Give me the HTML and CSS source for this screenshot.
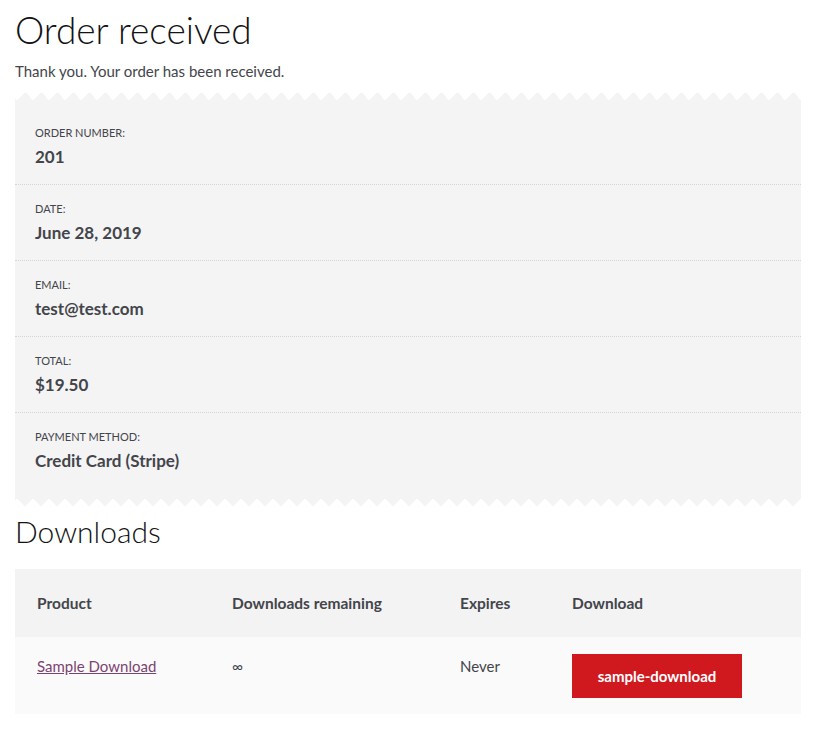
FILE: index.html
```html
<!DOCTYPE html>
<html lang="en">
<head>
<meta charset="utf-8">
<title>Order received</title>
<link rel="stylesheet" href="styles.css">
</head>
<body>
<main class="page">
  <h1 class="page-title">Order received</h1>
  <p class="thanks">Thank you. Your order has been received.</p>

  <section class="order-details">
    <ul class="details-list">
      <li class="detail">
        <span class="detail-label">Order number:</span>
        <strong class="detail-value">201</strong>
      </li>
      <li class="detail">
        <span class="detail-label">Date:</span>
        <strong class="detail-value">June 28, 2019</strong>
      </li>
      <li class="detail">
        <span class="detail-label">Email:</span>
        <strong class="detail-value">test@test.com</strong>
      </li>
      <li class="detail">
        <span class="detail-label">Total:</span>
        <strong class="detail-value">$19.50</strong>
      </li>
      <li class="detail">
        <span class="detail-label">Payment method:</span>
        <strong class="detail-value">Credit Card (Stripe)</strong>
      </li>
    </ul>
  </section>

  <h2 class="section-title">Downloads</h2>

  <table class="downloads">
    <colgroup>
      <col class="col-product">
      <col class="col-remaining">
      <col class="col-expires">
      <col class="col-download">
    </colgroup>
    <thead>
      <tr>
        <th>Product</th>
        <th>Downloads remaining</th>
        <th>Expires</th>
        <th>Download</th>
      </tr>
    </thead>
    <tbody>
      <tr>
        <td><a class="product-link" href="#">Sample Download</a></td>
        <td class="infinite">&infin;</td>
        <td>Never</td>
        <td><a class="button" href="#">sample-download</a></td>
      </tr>
    </tbody>
  </table>
</main>
</body>
</html>
```
FILE: styles.css
```css
* { box-sizing: border-box; }

html, body {
  margin: 0;
  padding: 0;
  background: #ffffff;
}

body {
  font-family: Lato, "Liberation Sans", sans-serif;
  font-size: 15px;
  color: #43454b;
}

.page {
  width: 786px;
  margin-left: 15px;
}

.page-title {
  margin: 0;
  padding-top: 6px;
  font-size: 37px;
  line-height: 48px;
  font-weight: 300;
  color: #131315;
}

.thanks {
  margin: 6px 0 0;
  line-height: 22px;
  font-size: 15px;
  color: #43454b;
}

.order-details {
  position: relative;
  margin-top: 18px;
  background: #f4f4f4;
  padding: 9px 0 10px;
  margin-bottom: 8px;
}

.order-details::before,
.order-details::after {
  content: "";
  position: absolute;
  left: 0;
  width: 100%;
  height: 8px;
  background-size: 16px 8px;
  background-repeat: repeat-x;
  background-position: 2px 0;
}

.order-details::before {
  top: -8px;
  background-image: conic-gradient(from 135deg at 50% 0, #f4f4f4 90deg, transparent 0);
}

.order-details::after {
  bottom: -8px;
  background-image: conic-gradient(from -45deg at 50% 100%, #f4f4f4 90deg, transparent 0);
}

.details-list {
  list-style: none;
  margin: 0;
  padding: 0;
}

.detail {
  padding: 15px 20px 14px;
  border-bottom: 1px dotted #d6d6d6;
}

.detail:last-child {
  border-bottom: 0;
}

.detail-label {
  display: block;
  font-size: 11px;
  line-height: 18px;
  text-transform: uppercase;
  color: #43454b;
}

.detail-value {
  display: block;
  margin-top: 2px;
  font-size: 17px;
  line-height: 26px;
  font-weight: 700;
  color: #43454b;
}

.section-title {
  margin: 0;
  padding-top: 5px;
  font-size: 30px;
  line-height: 40px;
  font-weight: 300;
  color: #131315;
}

.downloads {
  margin-top: 18px;
  width: 786px;
  border-collapse: collapse;
  table-layout: fixed;
}

.col-product { width: 195px; }
.col-remaining { width: 228px; }
.col-expires { width: 112px; }
.col-download { width: 251px; }

.downloads th {
  text-align: left;
  background: #f3f3f3;
  padding: 22px 22px;
  line-height: 24px;
  font-size: 15.5px;
  font-weight: 700;
  color: #43454b;
}

.downloads td {
  background: #fafafa;
  padding: 17px 22px 16px;
  line-height: 24px;
  vertical-align: top;
  font-size: 15px;
  color: #43454b;
}

.product-link {
  color: #7a4470;
  text-decoration: underline;
}

.infinite {
  font-size: 15px;
}

.button {
  display: inline-block;
  width: 170px;
  height: 44px;
  line-height: 44px;
  text-align: center;
  background: #d0191f;
  color: #ffffff;
  font-weight: 700;
  font-size: 15px;
  text-decoration: none;
}
```
